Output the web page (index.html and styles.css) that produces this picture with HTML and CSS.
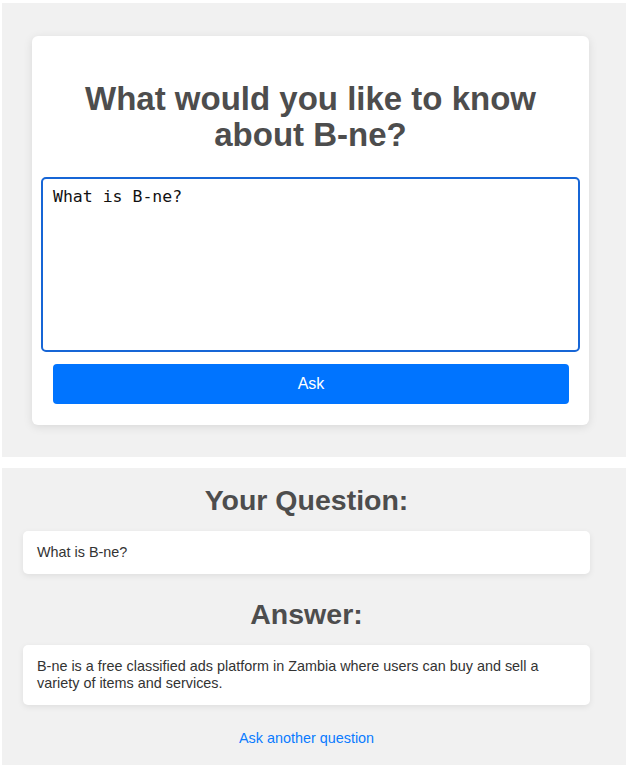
FILE: index.html
```html
<!DOCTYPE html>
<html lang="en">
<head>
<meta charset="utf-8">
<title>Ask about B-ne</title>
<link rel="stylesheet" href="styles.css">
</head>
<body>
<section class="panel panel-ask">
  <form class="card" onsubmit="return false;">
    <h1 class="title">What would you like to know about B-ne?</h1>
    <textarea class="question-input" autofocus>What is B-ne?</textarea>
    <button class="ask-btn" type="submit">Ask</button>
  </form>
</section>
<section class="panel panel-result">
  <h2 class="sub-title">Your Question:</h2>
  <div class="box">What is B-ne?</div>
  <h2 class="sub-title">Answer:</h2>
  <div class="box">B-ne is a free classified ads platform in Zambia where users can buy and sell a variety of items and services.</div>
  <div class="link-row"><a class="again-link" href="#">Ask another question</a></div>
</section>
</body>
</html>
```
FILE: styles.css
```css
html, body {
  background: #ffffff;
}
body {
  margin: 3px 5px 0 2px;
  font-family: "Liberation Sans", Arial, sans-serif;
  color: #333;
}
.panel {
  background: #f1f1f1;
}
.panel-ask {
  padding: 33px 37px 32px 30px;
  margin-bottom: 11px;
}
.card {
  background: #fff;
  border-radius: 6px;
  box-shadow: 0 2px 10px rgba(0, 0, 0, 0.1);
  padding: 20px 9px 21px;
  display: flex;
  flex-direction: column;
}
.title {
  font-size: 33px;
  line-height: 36px;
  font-weight: bold;
  color: #4d4d4d;
  text-align: center;
  margin: 25px 12px 24px;
}
.question-input {
  box-sizing: border-box;
  height: 175px;
  width: 100%;
  border: 2px solid #1766d6;
  border-radius: 5px;
  padding: 8px 10px;
  font-family: "DejaVu Sans Mono", monospace;
  font-size: 16.5px;
  color: #111;
  resize: none;
  outline: none;
  margin: 0;
}
.ask-btn {
  margin: 12px 11px 0 12px;
  height: 40px;
  background: #0074ff;
  color: #fff;
  border: none;
  border-radius: 4px;
  font-family: "Liberation Sans", Arial, sans-serif;
  font-size: 16px;
}
.panel-result {
  padding: 16px 36px 24px 21px;
}
.sub-title {
  font-size: 28.5px;
  line-height: 32px;
  font-weight: bold;
  color: #4d4d4d;
  text-align: center;
  margin: 0 0 15px;
}
.box {
  background: #fff;
  border-radius: 5px;
  box-shadow: 0 2px 6px rgba(0, 0, 0, 0.08);
  padding: 13px 14px;
  font-size: 14.4px;
  line-height: 17px;
  color: #333;
  margin-bottom: 24px;
}
.link-row {
  text-align: center;
}
.again-link {
  color: #0a7bff;
  text-decoration: none;
  font-size: 14.4px;
  line-height: 16px;
}
```
